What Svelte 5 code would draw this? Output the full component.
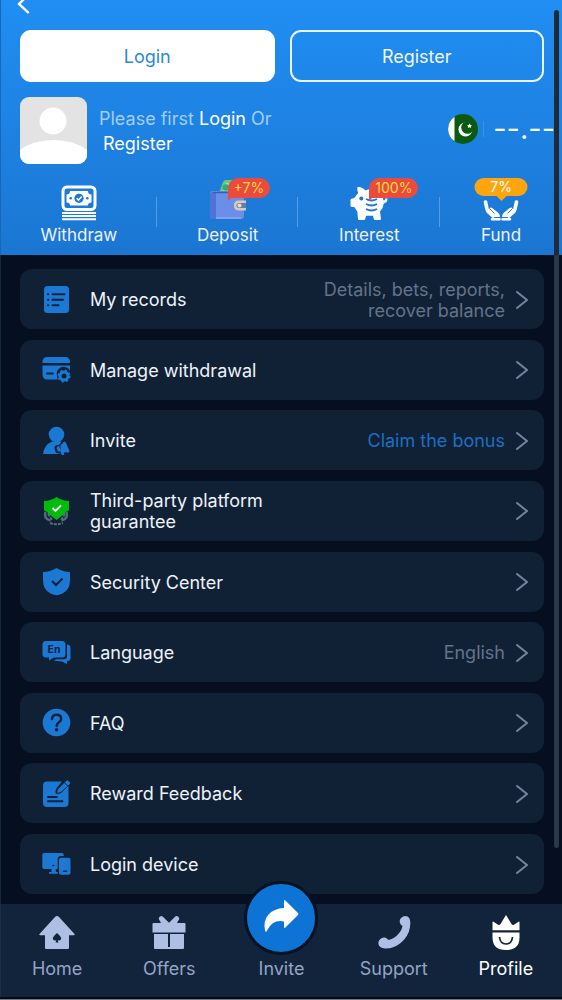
<script lang="ts">
  type Row = { icon: string; label: string; note?: string; accent?: boolean };

  const rows: Row[] = [
    { icon: "records", label: "My records", note: "Details, bets, reports, recover balance" },
    { icon: "card", label: "Manage withdrawal" },
    { icon: "invite", label: "Invite", note: "Claim the bonus", accent: true },
    { icon: "guarantee", label: "Third-party platform guarantee" },
    { icon: "security", label: "Security Center" },
    { icon: "language", label: "Language", note: "English" },
    { icon: "faq", label: "FAQ" },
    { icon: "feedback", label: "Reward Feedback" },
    { icon: "device", label: "Login device" },
  ];

  const actions = [
    { icon: "withdraw", label: "Withdraw" },
    { icon: "deposit", label: "Deposit", badge: "+7%" },
    { icon: "interest", label: "Interest", badge: "100%" },
    { icon: "fund", label: "Fund", badge: "7%" },
  ];

  const tabs = ["Home", "Offers", "Invite", "Support", "Profile"];

  let active = "Profile";
</script>

{#snippet rowIcon(name: string)}
  <svg class="row-icon" viewBox="0 0 30 30" fill="#1b78d3" aria-hidden="true">
    {#if name === "records"}
      <rect x="3" y="1" width="25" height="27" rx="3.5" />
      <g stroke="#10233b" stroke-width="1.9" stroke-linecap="round">
        <path d="M11.5 9.3h12M11.5 14.7h10.5M11.5 20.2h6" />
        <path d="M7 9.3h.3M7 14.7h.3M7 20.2h.3" />
      </g>
    {:else if name === "card"}
      <path d="M1.5 8V6.500a4.500 4.500 0 0 1 4.500-4.500h18.500a4.500 4.500 0 0 1 4.500 4.500V8z" />
      <path d="M1.500 10.500H29v5.200a7 7 0 0 0-12.600 6.300q-.3 1.200.3 2.500H6a4.500 4.500 0 0 1-4.500-4.500z" />
      <path d="M6 18.500h6" stroke="#10233b" stroke-width="1.8" stroke-linecap="round" />
      <circle cx="23" cy="21" r="4" fill="none" stroke="#1b78d3" stroke-width="3" />
      <circle cx="23" cy="21" r="5.7" fill="none" stroke="#1b78d3" stroke-width="1.6" stroke-dasharray="2.2 2.276" />
    {:else if name === "invite"}
      <circle cx="15.500" cy="8.500" r="7.800" />
      <path d="M2 28q1-9 9-12.500h9.500q-1.500 3.500-5 3.800-2.700 1-1.800 4l1.300 3.700 5.500 1z" />
      <path d="M19.500 19q2-1 3.500-3.500l1.500.6 4 9-1.200 1.600q-2.300-.8-4.500-.2l.5 2.500h-2.600l-1.200-3z" />
      <path d="m18.200 19.900-1.500.5q-1.500.7-1 2l1 2.300q.5 1 1.800.7l1.500-.4z" />
    {:else if name === "guarantee"}
      <path d="M4.500 16q-2 7 5 8.500M25.500 16q2 7-5 8.500" fill="none" stroke="#59677d" stroke-width="2.600" />
      <path d="m7 18 4 6M24 18l-4 6M9 27q6.500 2.500 13 0" fill="none" stroke="#59677d" stroke-width="2" stroke-dasharray="3 1" />
      <path d="M15.500 1q5.500 3.700 12.500 4v8.300q0 2-3.500 2.800.4 1.800-2.500 3L15.500 24 9 19.100q-2.900-1.200-2.500-3-3.500-.8-3.500-2.800V5Q10 4.700 15.500 1z" fill="#00ba0c" />
      <path d="m11.500 12 3 3 5.500-5.600" fill="none" stroke="#fff" stroke-width="1.900" />
    {:else if name === "security"}
      <path d="M15.500 1q6.500 3.800 13.500 4v8q0 10-7.500 13.500-3.500 1.700-6 1.700t-6-1.700Q2 23 2 13V5Q9 4.800 15.500 1z" />
      <path d="m11 14 4 4 6.500-6.500" fill="none" stroke="#10233b" stroke-width="2.200" />
    {:else if name === "language"}
      <path d="M26 6.500q3.500 0 3.500 3.500V20q0 3-3.500 3v3l-5-2.500-8-.8 2-1.500h8q3 0 3-3z" />
      <path d="M5 3h16q3.500 0 3.500 3.500V16q0 3.500-3.500 3.500h-8l-5 3v-3H5q-3.500 0-3.500-3.500V6.500Q1.500 3 5 3z" />
      <text x="6.500" y="15" fill="#10233b" font-size="10.500" font-weight="700">En</text>
    {:else if name === "faq"}
      <circle cx="15.500" cy="14.500" r="13.800" />
      <path d="M11 11q.4-4.300 4.600-4.300 4.500 0 4.600 4 0 2.300-2.500 3.800-2 1.200-2 3.500" fill="none" stroke="#10233b" stroke-width="2.500" stroke-linecap="round" />
      <circle cx="15.600" cy="21.800" r="1.700" fill="#10233b" />
    {:else if name === "feedback"}
      <path d="M6 2.500h15L15.500 9q-1.700 3.500-.8 5.500 3.300 1.300 6.300-1.200l6.500-6.500V24q0 4-4 4H6q-4 0-4-4V6.500q0-4 4-4z" />
      <path d="M7 18h9M7 22.300h14.500" stroke="#10233b" stroke-width="1.900" stroke-linecap="round" />
      <path d="m25.500 1.700q.8-.9 1.700 0l1.600 1.600q.8.900 0 1.700L20.500 12.500q-2 1.500-4.500 1.300.2-2.700 1.700-4.400z" />
      <path d="m23.500 3.800 3.300 3.300" stroke="#10233b" stroke-width="1" />
    {:else if name === "device"}
      <path d="M3 3h18q1.700 0 1.700 1.700V6H20q-3.300 0-3.300 3.200V19H3q-1.700 0-1.700-1.700V4.700Q1.300 3 3 3z" />
      <path d="M10.500 19h4.300v3h2v1.700H8V22h2.500z" />
      <rect x="18" y="7.700" width="11.500" height="17" rx="2" />
      <path d="M22.500 21.200h3M12 15.500h.7" stroke="#10233b" stroke-width="1.500" stroke-linecap="round" />
    {/if}
  </svg>
{/snippet}

{#snippet actionIcon(name: string)}
  <svg class="action-icon" viewBox="0 0 38 36" fill="#fff" aria-hidden="true">
    {#if name === "withdraw"}
      <rect x="3" y="2" width="32" height="22.500" rx="4" fill="none" stroke="#fff" stroke-width="3" />
      <path d="M10 6h18q0 3.500 3.500 3.500v8Q28 17.500 28 20.500H10q0-3-3.500-3v-8Q10 9.500 10 6z" />
      <circle cx="19" cy="13.300" r="4.600" fill="#1b78d3" />
      <path d="m16.700 13.300 1.800 1.800 3.200-3.500" fill="none" stroke="#fff" stroke-width="1.500" />
      <circle cx="10.700" cy="13.300" r="1.300" fill="#1b78d3" />
      <circle cx="27.300" cy="13.300" r="1.300" fill="#1b78d3" />
      <path d="M2 27h34v2H2zM2 30h34v2H2zM2 33.200h34v2H2z" />
    {:else if name === "deposit"}
      <path d="m10 8 4-11q1-2 3-2h10v13z" fill="#64c98a" />
      <path d="m13 8 4-10 11 1v9z" fill="#a6e68a" />
      <circle cx="17" cy="2.500" r="3.300" fill="#36a973" />
      <path d="M4 6h28q3 0 3 3v22q0 3-3 3H4q-3 0-3-3V9q0-3 3-3z" fill="#6b8fe9" />
      <path d="M4 7h3v27H4q-3 0-3-3V9q0-2 3-2z" fill="#4f74d3" />
      <path d="M4 7.500h28" stroke="#3d5cb0" stroke-width="1.500" />
      <path d="M7 33h25" stroke="#8aa6f2" stroke-width="1.500" />
      <path d="M37 15.500H30q-5 0-5 5t5 5h7z" fill="#d1cfba" />
      <path d="M37 18h-7q-2.500 0-2.500 2.500T30 23h7z" fill="#657dae" />
      <circle cx="30.500" cy="20.500" r="2" fill="#f2dfac" />
    {:else if name === "interest"}
      <path d="M8.500 2q4 0 7 3.500Q22 2 29 7.500q4 3.500 4.500 8 1.500 0 2-2 1.500-.7 2 .6 0 3.500-3.700 4.500-.6 4.700-3.800 7.900l1 7.500q0 1-1 1h-5q-1 0-1.200-1l-.8-3.300h-7l-.8 3.300q-.2 1-1.200 1H9q-1 0-1-1l-.7-7.600-3-4.400H2q-1.500 0-1.500-1.500V15q0-1 1-1.200l2.700-.8 4-5q-1.500-3-.7-6z" />
      <circle cx="11.300" cy="13.500" r="2" fill="#1b78d3" />
      <path d="M16 14q5.500 3 11 0M16 19q5.500 3 11 0M16 24q5.500 3 11 0" fill="none" stroke="#1b78d3" stroke-width="1.900" />
    {:else if name === "fund"}
      <g fill="none" stroke="#fff" stroke-linecap="round" stroke-linejoin="round">
        <path d="m3.500 17 1.500 7q.5 2 2 3.500l4 3.500M34.500 17l-1.500 7q-.5 2-2 3.500L27 31" stroke-width="3.600" />
        <path d="m9 24.500 5 4M29 24.500l-5 4" stroke-width="4" />
      </g>
      <path d="m7 27 4-2 4 2q3 1.500 3 5h-7zM31 27l-4-2-4 2q-3 1.500-3 5h7z" />
      <path d="m7.500 23.500 5 5M30.500 23.500l-5 5" stroke="#1b78d3" stroke-width="1" />
      <path d="M10 34.300h7.500M20.500 34.300H28" stroke="#fff" stroke-width="2.600" stroke-linecap="round" />
    {/if}
  </svg>
{/snippet}

{#snippet tabIcon(name: string)}
  <svg class="tab-icon" viewBox="0 0 38 38" fill="currentColor" aria-hidden="true">
    {#if name === "Home"}
      <path d="M19 2q1 0 2 1l15.500 17q.8 1.300-.8 1.300H31V34q0 1-1 1H8q-1 0-1-1V21.300H2.300q-1.600 0-.8-1.300L17 3q1-1 2-1z" />
      <path d="M19 19q4.200 3.500 4.200 5.500 0 2.500-3.500 2l.8 2h-3l.8-2q-3.500.5-3.500-2Q14.800 22.500 19 19z" fill="#13243b" />
    {:else if name === "Offers"}
      <path d="M10 2.500q2-1.500 3.700 1L19 8.700l5.300-5.200q1.700-2.500 3.700-1 2.300 2 .3 4L27 9h7.500q1 0 1 1v8.500h-33V10q0-1 1-1H11L9.700 6.500q-2-2 .3-4z" />
      <path d="M4 20h14v15H5q-1 0-1-1zM20 20h14v14q0 1-1 1H20zM18 33h2v2h-2z" />
    {:else if name === "Support"}
      <path d="M26 4q3-3 6.500-1.500Q36.500 5 35 13q-1.500 10-10 16.500Q17.500 35 10 34.500q-5.500-.5-6.500-4-.7-4 2.500-6 3.500-2 6.200.3l1.500 1.200q6-1.500 10.500-7 2.800-3.500 3.300-7l-1.800-1.500q-2.200-3.500.3-6.500z" />
    {:else if name === "Profile"}
      <path d="m19 1 5.500 9q.8 1.300 2 1l5-3.300q1-.4 1 .8V16.300h-27V8.500q0-1.200 1-.8l5 3.300q1.200.3 2-1z" />
      <path d="M5.500 18.500h27v5Q32.500 36 19 36T5.500 23.500z" />
      <path d="M12.500 23q.7 7 6.500 7t6.500-7" fill="none" stroke="#13243b" stroke-width="1.700" />
    {/if}
  </svg>
{/snippet}

<div class="page">
  <header>
    <button class="back" type="button" aria-label="Back">
      <svg viewBox="0 0 14 14" fill="none" stroke="#fff" stroke-width="2.400" stroke-linecap="round">
        <path d="m12-5-9 9 9 8.300" />
      </svg>
    </button>

    <div class="auth">
      <button class="filled" type="button">Login</button>
      <button type="button">Register</button>
    </div>

    <div class="user">
      <svg class="avatar" viewBox="0 0 67 67" aria-hidden="true">
        <path fill="#e3e3e3" d="M0 0h67v67H0z" />
        <circle cx="33" cy="24" r="13.500" fill="#fff" />
        <path d="M0 53q13-10 33.500-10T67 53v14H0z" fill="#fff" />
      </svg>
      <p>
        Please first <a href="#login">Login</a> Or<br />
        <a class="second" href="#register">Register</a>
      </p>
      <div class="balance">
        <svg class="flag" viewBox="0 0 30 30" aria-label="Pakistan">
          <circle cx="15" cy="15" r="15" fill="#0b5a12" />
          <path d="M6.500 2.700v24.600a15 15 0 0 1 0-24.600z" fill="#fff" />
          <circle cx="17.500" cy="15.500" r="7" fill="#fff" />
          <circle cx="19.500" cy="13.500" r="6.300" fill="#0b5a12" />
          <path d="m21.500 9.500.8 1.500 1.700.2-1.200 1.200.3 1.700-1.600-.8-1.600.8.300-1.700-1.200-1.200 1.700-.2z" fill="#fff" />
        </svg>
        <span class="amount">--.--</span>
      </div>
    </div>

    <div class="actions">
      {#each actions as action}
        <button type="button">
          {@render actionIcon(action.icon)}
          <span>{action.label}</span>
          {#if action.badge}
            <b class="badge {action.icon}">{action.badge}</b>
          {/if}
        </button>
      {/each}
    </div>
  </header>

  <main>
    {#each rows as row}
      <button class="row" type="button">
        {@render rowIcon(row.icon)}
        <span class="label">{row.label}</span>
        <span class="note" class:accent={row.accent}>{row.note ?? ""}</span>
        <svg class="chevron" viewBox="0 0 12 18" fill="none" stroke="#75849a" stroke-width="2" stroke-linecap="round" aria-hidden="true">
          <path d="m1 1 10 8-10 8" />
        </svg>
      </button>
    {/each}
  </main>

  <nav>
    {#each tabs as tab}
      <button type="button" class:active={active === tab} on:click={() => (active = tab)}>
        {#if tab === "Invite"}
          <span class="share">
            <svg viewBox="0 0 38 38" fill="#fff" aria-hidden="true">
              <path d="M22 2q0-1.800 1.400-.6L36 14q1 1 0 2L23.400 28.500q-1.400 1.200-1.400-.6V22.500Q11 20 5 31.500 4 34 3 31.500 1 22 6.500 15.500 12 9.500 22 9z" />
            </svg>
          </span>
        {:else}
          {@render tabIcon(tab)}
        {/if}
        <span>{tab}</span>
      </button>
    {/each}
  </nav>

  <div class="scrollbar"></div>
</div>

<style>
  :global(body) {
    background: #050f20;
  }

  .page {
    position: relative;
    display: flex;
    flex-direction: column;
    box-sizing: border-box;
    min-height: 100vh;
    border-bottom: 1px solid #77777b;
    overflow: hidden;
    background: #050f20;
    box-shadow: inset 1px 0 #17293e;
    color: #eef3fa;
    font: 18px/21px Inter, Roboto, sans-serif;
  }

  button {
    margin: 0;
    padding: 0;
    border: 0;
    background: none;
    color: inherit;
    font: inherit;
    cursor: pointer;
  }

  svg {
    display: block;
    flex: none;
  }

  header {
    background: linear-gradient(#208ef3, #1b76d2);
    box-shadow: inset 1px 0 #1768b8;
  }

  .back {
    display: block;
    margin-left: 16px;
  }

  .back svg {
    width: 14px;
    height: 14px;
  }

  .auth {
    display: flex;
    gap: 15px;
    padding: 16px 18px 0 20px;
  }

  .auth button {
    flex: 1;
    height: 52px;
    border: 2px solid #e9f4ff;
    border-radius: 11px;
    color: #f2f8ff;
  }

  .auth .filled {
    border-color: #fff;
    background: #fff;
    color: #2a87e2;
  }

  .user {
    display: flex;
    align-items: center;
    padding: 15px 0 0 20px;
  }

  .avatar {
    width: 67px;
    height: 67px;
    border-radius: 9px;
  }

  .user p {
    flex: 1;
    margin: 0 0 0 12px;
    color: #a2cdf8;
    line-height: 25px;
    white-space: nowrap;
  }

  .user a {
    color: #fff;
    text-decoration: none;
  }

  .user .second {
    margin-left: 4px;
  }

  .balance {
    display: flex;
    align-items: center;
    padding-bottom: 4px;
  }

  .flag {
    width: 30px;
    height: 30px;
  }

  .amount {
    margin-left: 5px;
    padding: 0 7px 0 9px;
    border-left: 1px solid #3f92e3;
    color: #fff;
    font-size: 29px;
    line-height: 16px;
  }

  .actions {
    display: grid;
    grid-template-columns: 156fr 142fr 142fr 122fr;
    padding: 21px 0 9px 1px;
  }

  .actions button {
    position: relative;
    display: flex;
    flex-direction: column;
    align-items: center;
    gap: 4px;
    font-size: 17px;
  }

  .actions button:not(:last-child)::after {
    content: "";
    position: absolute;
    top: 12px;
    right: 0;
    width: 1px;
    height: 30px;
    background: #529de5;
  }

  .action-icon {
    width: 38px;
    height: 36px;
    overflow: visible;
  }

  .badge {
    position: absolute;
    top: -7px;
    left: 50%;
    padding: 0 6px;
    border-radius: 10px 10px 10px 0;
    background: #eb4a3d;
    color: #ffdb42;
    font-size: 14px;
    font-weight: 400;
    line-height: 20px;
  }

  .badge::after {
    content: "";
    position: absolute;
    top: 19px;
    left: 0;
    border-top: 4px solid #eb4a3d;
    border-right: 4px solid transparent;
  }

  .badge.fund {
    width: 41px;
    border-radius: 10px;
    background: #fda50c;
    color: #fff;
    line-height: 18px;
    transform: translateX(-50%);
  }

  .badge.fund::after {
    top: 18px;
    left: 50%;
    border: 5px solid transparent;
    border-top-color: #fda50c;
    border-bottom: 0;
    transform: translateX(-50%);
  }

  main {
    flex: 1;
    display: flex;
    flex-direction: column;
    justify-content: space-between;
    padding: 14px 18px 10px 20px;
  }

  .row {
    display: flex;
    align-items: center;
    min-height: 60px;
    padding: 1px 16px 0 21px;
    border-radius: 12px;
    background: #102136;
    text-align: left;
  }

  .row-icon {
    width: 30px;
    height: 30px;
  }

  .label {
    width: 190px;
    margin-left: 19px;
  }

  .note {
    flex: 1;
    margin: 0 11px 0 40px;
    color: #64738a;
    text-align: right;
  }

  .accent {
    color: #1b70c2;
  }

  .chevron {
    width: 12px;
    height: 18px;
  }

  nav {
    display: grid;
    grid-template-columns: repeat(5, 1fr);
    padding: 10px 0 18px 1px;
    border-bottom: 2px solid #050a12;
    background: #12243b;
    box-shadow: inset 1px 0 #1b2e45;
    color: #94a4c4;
  }

  nav button {
    position: relative;
    display: flex;
    flex-direction: column;
    align-items: center;
    justify-content: flex-end;
    gap: 6px;
  }

  .tab-icon {
    width: 38px;
    height: 38px;
    color: #adbfe2;
  }

  .active,
  .active .tab-icon {
    color: #fff;
  }

  .share {
    position: absolute;
    top: -33px;
    left: 50%;
    display: grid;
    place-items: center;
    width: 68px;
    height: 68px;
    border: 3px solid #071221;
    border-radius: 50%;
    background: #0d73d5;
    transform: translateX(-50%);
  }

  .share svg {
    width: 38px;
    height: 38px;
  }

  .scrollbar {
    position: absolute;
    top: 10px;
    right: 3px;
    bottom: 151px;
    width: 5px;
    border-radius: 3px;
    background: linear-gradient(#202a35 245px, #2a384a 245px);
  }
</style>
